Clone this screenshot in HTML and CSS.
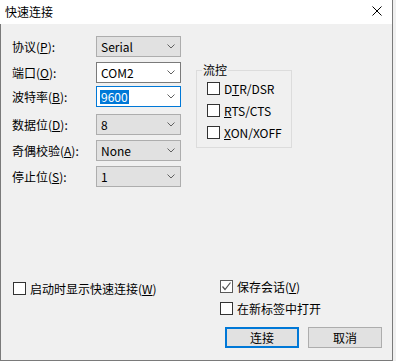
FILE: index.html
```html
<!DOCTYPE html>
<html lang="zh-CN">
<head>
    <meta charset="UTF-8">
    <title>快速连接</title>
    <link rel="stylesheet" href="styles.css">
</head>
<body>
    <div class="window">
        <div class="titlebar">
            <span class="title">快速连接</span>
            <svg class="close" width="10" height="10" viewBox="0 0 10 10">
                <path d="M0.5 0.5 L9.5 9.5 M9.5 0.5 L0.5 9.5" stroke="#000" stroke-width="1" fill="none"/>
            </svg>
        </div>
        <div class="client">
            <div class="top">
                <div class="fields">
                    <div class="row">
                        <span class="lbl">协议(<u>P</u>):</span>
                        <div class="combo">
                            <span class="val">Serial</span>
                            <svg class="chev" width="8" height="5" viewBox="0 0 8 5"><path d="M0.5 0.5 L4 4 L7.5 0.5" stroke="#606060" fill="none"/></svg>
                        </div>
                    </div>
                    <div class="row">
                        <span class="lbl">端口(<u>O</u>):</span>
                        <div class="combo combo-edit">
                            <span class="val">COM2</span>
                            <svg class="chev" width="8" height="5" viewBox="0 0 8 5"><path d="M0.5 0.5 L4 4 L7.5 0.5" stroke="#606060" fill="none"/></svg>
                        </div>
                    </div>
                    <div class="row row-focus">
                        <span class="lbl">波特率(<u>B</u>):</span>
                        <div class="combo combo-edit combo-focus">
                            <span class="val sel">9600</span>
                            <svg class="chev" width="8" height="5" viewBox="0 0 8 5"><path d="M0.5 0.5 L4 4 L7.5 0.5" stroke="#606060" fill="none"/></svg>
                        </div>
                    </div>
                    <div class="row">
                        <span class="lbl">数据位(<u>D</u>):</span>
                        <div class="combo">
                            <span class="val">8</span>
                            <svg class="chev" width="8" height="5" viewBox="0 0 8 5"><path d="M0.5 0.5 L4 4 L7.5 0.5" stroke="#606060" fill="none"/></svg>
                        </div>
                    </div>
                    <div class="row">
                        <span class="lbl">奇偶校验(<u>A</u>):</span>
                        <div class="combo">
                            <span class="val">None</span>
                            <svg class="chev" width="8" height="5" viewBox="0 0 8 5"><path d="M0.5 0.5 L4 4 L7.5 0.5" stroke="#606060" fill="none"/></svg>
                        </div>
                    </div>
                    <div class="row">
                        <span class="lbl">停止位(<u>S</u>):</span>
                        <div class="combo">
                            <span class="val">1</span>
                            <svg class="chev" width="8" height="5" viewBox="0 0 8 5"><path d="M0.5 0.5 L4 4 L7.5 0.5" stroke="#606060" fill="none"/></svg>
                        </div>
                    </div>
                </div>

                <fieldset class="group">
                    <legend>流控</legend>
                    <div class="check"><span class="box"></span><span>D<u>T</u>R/DSR</span></div>
                    <div class="check"><span class="box"></span><span><u>R</u>TS/CTS</span></div>
                    <div class="check"><span class="box"></span><span><u>X</u>ON/XOFF</span></div>
                </fieldset>
            </div>

            <div class="bottom">
                <div class="check check-startup"><span class="box"></span><span>启动时显示快速连接(<u>W</u>)</span></div>
                <div class="side">
                    <div class="check">
                        <span class="box box-checked">
                            <svg width="11" height="11" viewBox="0 0 11 11"><path d="M1.5 5.5 L4 8.5 L9.5 1.5" stroke="#505050" stroke-width="1.2" fill="none"/></svg>
                        </span>
                        <span>保存会话(<u>V</u>)</span>
                    </div>
                    <div class="check"><span class="box"></span><span>在新标签中打开</span></div>
                    <div class="buttons">
                        <button class="btn btn-default">连接</button>
                        <button class="btn">取消</button>
                    </div>
                </div>
            </div>
        </div>
    </div>
</body>
</html>
```

FILE: styles.css
```css
    body {
        margin: 0;
        padding: 0;
        background-color: #f0f0f0;
        font-family: "Noto Sans CJK SC", sans-serif;
        font-size: 12px;
        color: #000;
    }

    .window {
        width: 393px;
        height: 361px;
        box-sizing: border-box;
        border-right: 1px solid #7a7a7a;
        display: flex;
        flex-direction: column;
    }

    .titlebar {
        height: 24px;
        background-color: #fff;
        display: flex;
        align-items: center;
        justify-content: space-between;
        padding: 0 10px 0 5px;
    }

    .title {
        line-height: 14px;
    }

    .close {
        display: block;
        margin-top: -2px;
    }

    .client {
        flex-grow: 1;
        border-left: 1px solid #7a7a7a;
        border-bottom: 1px solid #7a7a7a;
        padding: 12px 10px 0 11px;
    }

    .top {
        display: flex;
        align-items: flex-start;
    }

    .fields {
        display: flex;
        flex-direction: column;
        gap: 5px;
    }

    .row {
        display: flex;
        align-items: center;
    }

    .row-focus {
        margin-top: -2px;
        margin-bottom: 2px;
    }

    .lbl {
        width: 84px;
        line-height: 14px;
    }

    u {
        text-decoration: underline;
        text-underline-offset: 1px;
    }

    .combo {
        width: 85px;
        height: 21px;
        box-sizing: border-box;
        border: 1px solid #adadad;
        background-color: #e1e1e1;
        display: flex;
        align-items: center;
        justify-content: space-between;
        padding: 0 5px 0 4px;
    }

    .combo-edit {
        background-color: #fff;
        border-color: #7a7a7a;
    }

    .combo-focus {
        border-color: #0078d7;
    }

    .val {
        line-height: 14px;
    }

    .sel {
        background-color: #0078d7;
        color: #fff;
        margin-left: -1px;
        padding: 0 1px;
    }

    .chev {
        display: block;
    }

    .group {
        margin: 27px 0 0 15px;
        padding: 0 0 8px 10px;
        width: 96px;
        box-sizing: border-box;
        border: 1px solid #dcdcdc;
        display: flex;
        flex-direction: column;
        gap: 9px;
    }

    .group legend {
        padding: 0 1px;
        margin-left: -5px;
        line-height: 14px;
        margin-bottom: 5px;
    }

    .check {
        display: flex;
        align-items: center;
        gap: 4px;
        height: 13px;
        line-height: 14px;
        white-space: nowrap;
    }

    .box {
        width: 13px;
        height: 13px;
        box-sizing: border-box;
        border: 1px solid #333;
        background-color: #fff;
        flex-shrink: 0;
        display: flex;
        align-items: center;
        justify-content: center;
    }

    .box-checked {
        border-color: #5a5a5a;
    }

    .box svg {
        display: block;
    }

    .bottom {
        display: flex;
        justify-content: space-between;
        margin-top: 93px;
    }

    .check-startup {
        margin-top: 2px;
        margin-left: 1px;
    }

    .side {
        width: 162px;
        display: flex;
        flex-direction: column;
        gap: 9px;
    }

    .buttons {
        display: flex;
        gap: 9px;
        margin: 3px 0 0 5px;
    }

    .btn {
        width: 74px;
        height: 21px;
        box-sizing: border-box;
        border: 1px solid #adadad;
        background-color: #e1e1e1;
        font-family: inherit;
        font-size: 12px;
        color: #000;
        padding: 0;
        line-height: 14px;
    }

    .btn-default {
        border: 2px solid #0078d7;
    }
```
